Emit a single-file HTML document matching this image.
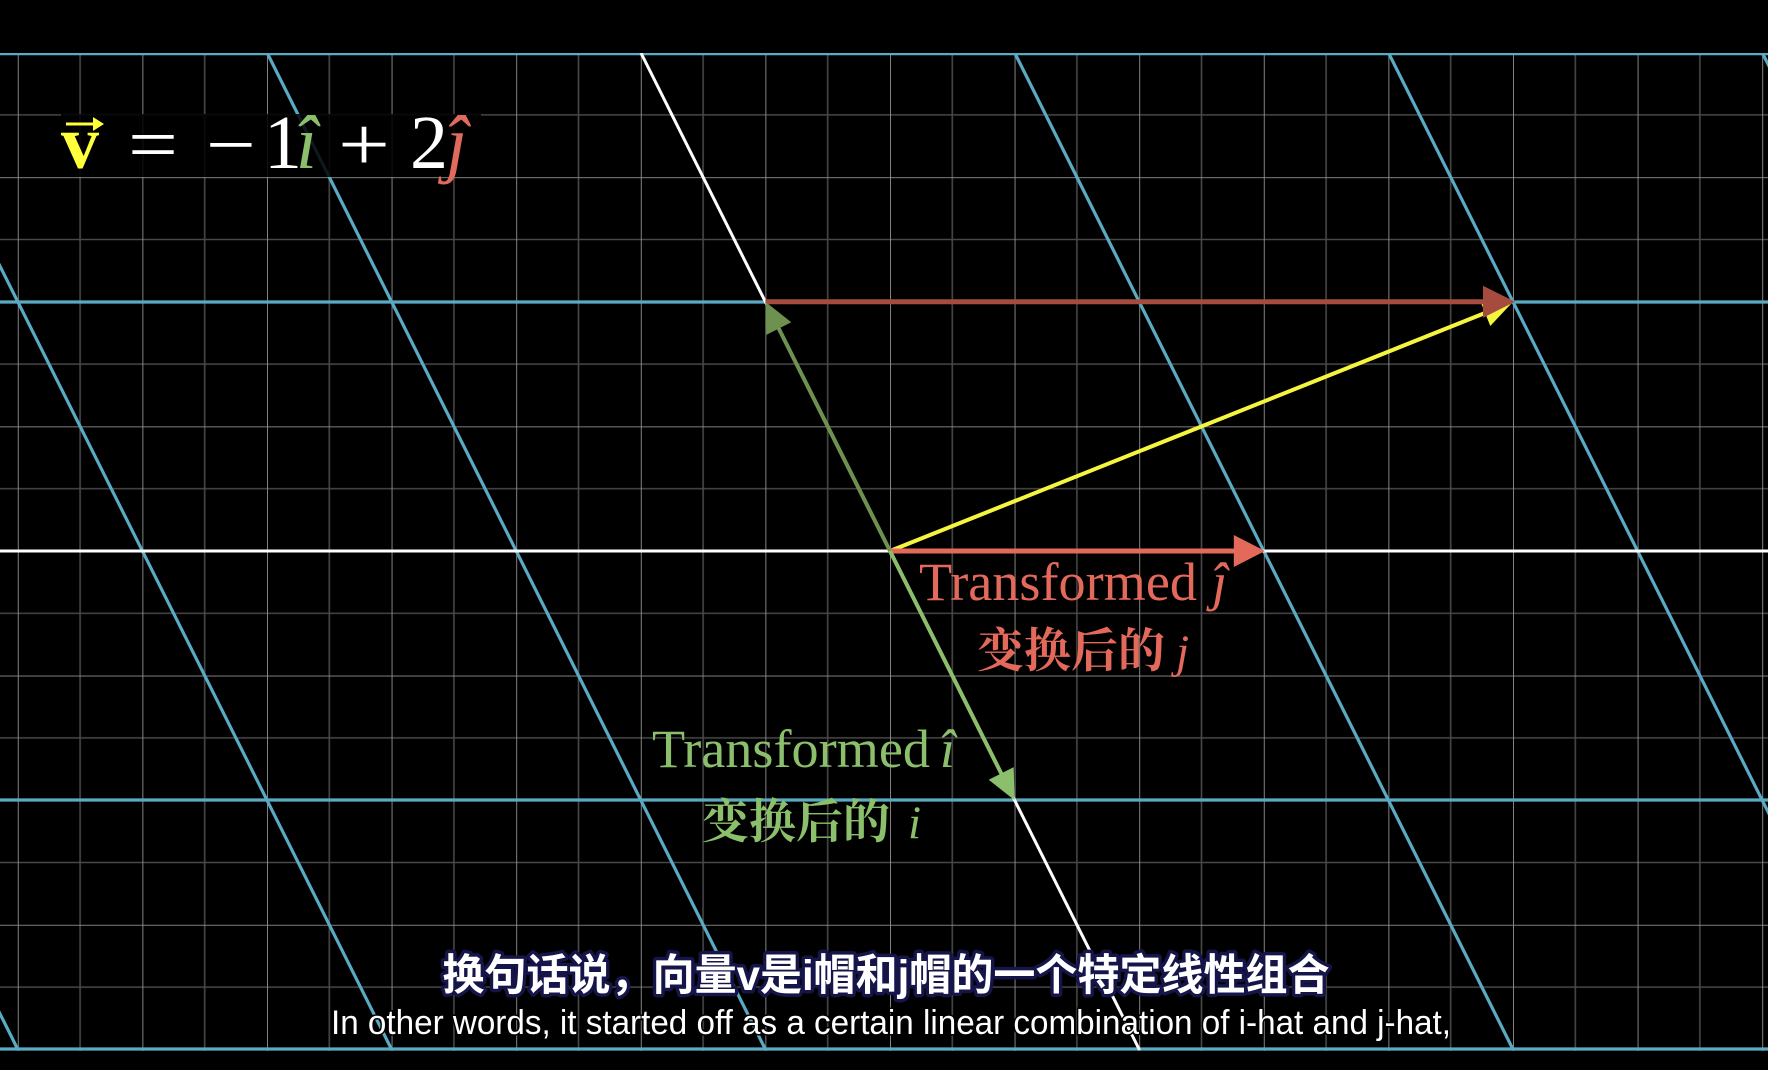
<!DOCTYPE html>
<html><head><meta charset="utf-8"><style>
html,body{margin:0;padding:0;background:#000;}
svg{display:block}
</style></head><body>
<svg width="1768" height="1070" viewBox="0 0 1768 1070" xmlns="http://www.w3.org/2000/svg">
<defs>
<pattern id="g" patternUnits="userSpaceOnUse" x="17.8" y="52.6" width="124.6" height="124.6">
<line x1="62.3" y1="0" x2="62.3" y2="124.6" stroke="#484848" stroke-width="1.6"/>
<line x1="0" y1="62.3" x2="124.6" y2="62.3" stroke="#484848" stroke-width="1.6"/>
<line x1="0" y1="0" x2="0" y2="124.6" stroke="#909090" stroke-width="1.8"/>
<line x1="0" y1="0" x2="124.6" y2="0" stroke="#909090" stroke-width="1.8"/>
</pattern>
<clipPath id="c"><rect x="0" y="53" width="1768" height="998"/></clipPath>
</defs>
<rect width="1768" height="1070" fill="#000"/>
<g clip-path="url(#c)">
<rect x="0" y="52" width="1768" height="1000" fill="url(#g)"/>
<g stroke="#5aaac4" stroke-width="3.2">
<line x1="0" y1="53.6" x2="1768" y2="53.6"/>
<line x1="0" y1="302" x2="1768" y2="302"/>
<line x1="0" y1="800" x2="1768" y2="800"/>
<line x1="0" y1="1049" x2="1768" y2="1049"/>
<line x1="-480.4" y1="53" x2="18.1" y2="1050"/>
<line x1="-106.6" y1="53" x2="391.9" y2="1050"/>
<line x1="267.2" y1="53" x2="765.7" y2="1050"/>
<line x1="1014.8" y1="53" x2="1513.3" y2="1050"/>
<line x1="1388.6" y1="53" x2="1887.1" y2="1050"/>
<line x1="1762.4" y1="53" x2="2260.9" y2="1050"/>
</g>
<g stroke="#fff" stroke-width="3">
<line x1="0" y1="551" x2="1768" y2="551"/>
<line x1="641" y1="53" x2="1139.5" y2="1050"/>
</g>
</g>
<rect x="61" y="114" width="420" height="63" fill="#000" opacity="0.85"/>
<g stroke-width="4">
<line x1="890" y1="551" x2="1485" y2="313" stroke="#f5f53f"/>
<polygon points="1513,301.8 1490.3,326 1479.9,300" fill="#f5f53f"/>
<line x1="765.4" y1="301.8" x2="1484" y2="301.8" stroke="#a54c3f" stroke-width="5"/>
<polygon points="1515,301.8 1483,285.8 1483,317.8" fill="#a54c3f"/>
<line x1="890" y1="551" x2="778.8" y2="328.6" stroke="#6f9150"/>
<polygon points="765.4,301.8 791.3,322.3 766.3,334.9" fill="#6f9150"/>
<line x1="890" y1="551" x2="1233.8" y2="551" stroke="#e3695b" stroke-width="5"/>
<polygon points="1265,551 1233.8,535 1233.8,567" fill="#e3695b"/>
<line x1="890" y1="551" x2="1001.2" y2="773.4" stroke="#8cbf6c"/>
<polygon points="1014.6,800.2 988.7,779.7 1013.7,767.1" fill="#8cbf6c"/>
</g>
<g font-family="'Liberation Serif', serif" font-size="76" fill="#fff">
<text x="61" y="168" fill="#ffff3c" font-weight="bold" font-size="76">v</text>
<line x1="66" y1="124" x2="100" y2="124" stroke="#ffff3c" stroke-width="3"/>
<polygon points="104,124 93,117 93,131" fill="#ffff3c"/>
<text x="128" y="170" textLength="50" lengthAdjust="spacingAndGlyphs">=</text>
<text x="206" y="170" textLength="50" lengthAdjust="spacingAndGlyphs">−</text>
<text x="264" y="168">1</text>
<text x="296" y="168" fill="#8cbf6c" font-style="italic">î</text>
<text x="338" y="170" textLength="52" lengthAdjust="spacingAndGlyphs">+</text>
<text x="410" y="168">2</text>
<text x="446" y="168" fill="#e06a5c" font-style="italic">ĵ</text>
</g>
<g font-family="'Liberation Serif', serif" font-size="54">
<text x="919" y="600" fill="#e3695b" textLength="278" lengthAdjust="spacingAndGlyphs">Transformed</text>
<text x="1212" y="600" fill="#e3695b" font-style="italic">ĵ</text>
<text x="652" y="767" fill="#8cbf6c" textLength="278" lengthAdjust="spacingAndGlyphs">Transformed</text>
<text x="940" y="767" fill="#8cbf6c" font-style="italic">î</text>
</g>
<g font-family="'Liberation Serif','Noto Serif CJK SC',serif" font-size="47" font-weight="bold">
<text x="977" y="667" fill="#e3695b">变换后的</text>
<text x="1176" y="667" fill="#e3695b" font-style="italic" font-weight="normal">j</text>
<text x="702" y="838" fill="#8cbf6c">变换后的</text>
<text x="908" y="838" fill="#8cbf6c" font-style="italic" font-weight="normal">i</text>
</g>
<text x="886" y="990" text-anchor="middle" font-family="'Liberation Sans','Noto Sans CJK SC',sans-serif" font-size="43" font-weight="bold" fill="#fff" stroke="#15154a" stroke-width="7" paint-order="stroke" stroke-linejoin="round" textLength="887" lengthAdjust="spacingAndGlyphs">换句话说，向量v是i帽和j帽的一个特定线性组合</text>
<text x="891" y="1034" text-anchor="middle" font-family="'Liberation Sans',sans-serif" font-size="34" fill="#fff" stroke="#000" stroke-width="3" paint-order="stroke" textLength="1120" lengthAdjust="spacingAndGlyphs">In other words, it started off as a certain linear combination of i-hat and j-hat,</text>
</svg>
</body></html>
